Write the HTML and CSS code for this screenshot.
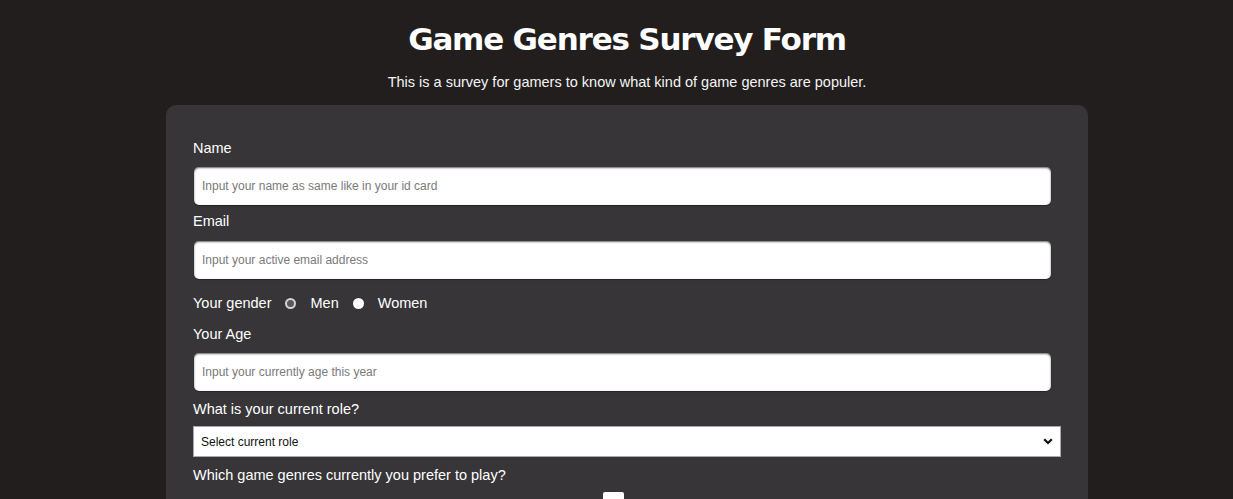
FILE: index.html
```html
<!DOCTYPE html>
<html lang="en">
<head>
<meta charset="utf-8">
<title>Game Genres Survey Form</title>
<link rel="stylesheet" href="styles.css">
</head>
<body>
<div class="page">
  <h1 class="title">Game Genres Survey Form</h1>
  <p class="subtitle">This is a survey for gamers to know what kind of game genres are populer.</p>
  <form class="card">
    <label class="label" for="name">Name</label>
    <input class="field" id="name" type="text" placeholder="Input your name as same like in your id card">
    <label class="label label-email" for="email">Email</label>
    <input class="field field-email" id="email" type="email" placeholder="Input your active email address">
    <div class="gender">
      <span>Your gender</span>
      <span class="radio radio-off"></span>
      <span>Men</span>
      <span class="radio radio-on"></span>
      <span>Women</span>
    </div>
    <label class="label label-age" for="age">Your Age</label>
    <input class="field" id="age" type="text" placeholder="Input your currently age this year">
    <label class="label label-role" for="role">What is your current role?</label>
    <div class="select" id="role">
      <span>Select current role</span>
      <svg class="chevron" width="10" height="7" viewBox="0 0 10 7"><path d="M1.2 1.2 L5 5 L8.8 1.2" fill="none" stroke="#111" stroke-width="2.2"/></svg>
    </div>
    <label class="label label-genres">Which game genres currently you prefer to play?</label>
    <div class="checks"><span class="check"></span></div>
  </form>
</div>
</body>
</html>
```

FILE: styles.css
```css
html, body {
  margin: 0;
  padding: 0;
  background: #211e1d;
  height: 100%;
  overflow: hidden;
}
.page {
  padding-left: 21px;
  font-family: "Liberation Sans", Arial, sans-serif;
  color: #ffffff;
}
.title {
  margin: 20px 0 0;
  font-family: "DejaVu Sans", Verdana, sans-serif;
  font-weight: bold;
  font-size: 31px;
  letter-spacing: -1.2px;
  line-height: 38px;
  text-align: center;
  color: #ffffff;
}
.subtitle {
  margin: 16px 0 0;
  font-size: 14.5px;
  line-height: 16px;
  text-align: center;
  color: #f4f4f4;
}
.card {
  box-sizing: border-box;
  width: 922px;
  margin: 15px auto 0;
  padding: 35px 27px 40px;
  background: #373538;
  border-radius: 10px;
  display: flex;
  flex-direction: column;
  align-items: flex-start;
}
.label {
  display: block;
  font-size: 14.5px;
  line-height: 17px;
  color: #ffffff;
}
.field {
  box-sizing: border-box;
  width: 857px;
  height: 38px;
  margin: 10px 0 0 1px;
  padding: 0 8px;
  border: none;
  border-radius: 5px;
  background: #ffffff;
  box-shadow: inset 0 1px 2px rgba(0,0,0,0.6), 0 1px 1px rgba(0,0,0,0.35);
  font-family: "Liberation Sans", Arial, sans-serif;
  font-size: 12px;
  color: #333;
  outline: none;
}
.field::placeholder {
  color: #7a7a7a;
}
.label-email {
  margin-top: 8px;
}
.field-email {
  margin-top: 11px;
}
.gender {
  display: flex;
  align-items: center;
  gap: 14px;
  margin-top: 16px;
  font-size: 14.5px;
  line-height: 17px;
}
.radio {
  box-sizing: border-box;
  width: 11px;
  height: 11px;
  border-radius: 50%;
}
.radio-off {
  border: 2px solid #d4d4d4;
  background: #5a585a;
}
.radio-on {
  background: #ffffff;
}
.label-age {
  margin-top: 14px;
}
.label-role {
  margin-top: 10px;
}
.select {
  box-sizing: border-box;
  width: 868px;
  height: 31px;
  margin-top: 8px;
  padding: 0 7px;
  background: #ffffff;
  border: 1px solid #a9a9a9;
  display: flex;
  align-items: center;
  justify-content: space-between;
  font-size: 12px;
  color: #111;
}
.chevron {
  display: block;
}
.label-genres {
  margin-top: 10px;
}
.checks {
  align-self: stretch;
  display: flex;
  padding-left: 410px;
  margin-top: 8px;
}
.check {
  width: 21px;
  height: 21px;
  background: #ffffff;
  border-radius: 2px;
}
```
